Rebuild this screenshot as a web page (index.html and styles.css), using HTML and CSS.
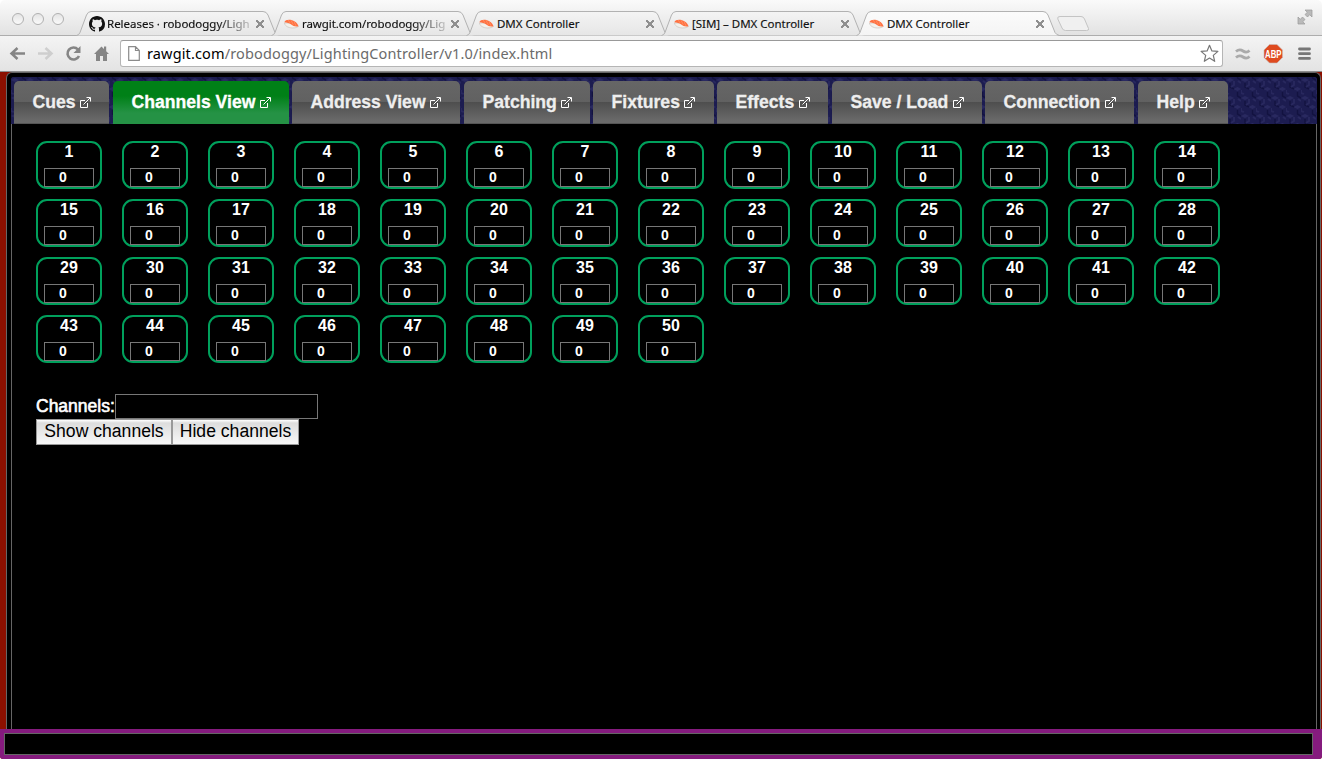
FILE: index.html
```html
<!DOCTYPE html>
<html lang="en">
<head>
<meta charset="utf-8">
<title>DMX Controller</title>
<link rel="stylesheet" href="styles.css">
</head>
<body>
<svg class="defs" width="0" height="0">
  <defs>
    <linearGradient id="tabfill" x1="0" y1="0" x2="0" y2="1"><stop offset="0" stop-color="#f4f4f4"/><stop offset="1" stop-color="#e6e6e6"/></linearGradient>
    <linearGradient id="activefill" x1="0" y1="0" x2="0" y2="1"><stop offset="0" stop-color="#fbfbfb"/><stop offset="1" stop-color="#f4f4f4"/></linearGradient>
    <pattern id="weave" width="15" height="18" patternUnits="userSpaceOnUse">
      <rect width="15" height="18" fill="#1c1c50"/>
      <path d="M0 3l4-2 4 2-4 2zM7.500 12l4-2 3.500 2-3.500 2z" fill="#292960"/>
      <path d="M4 6v4l4 2M11.500 15v3M11.500-1v2l3.500 2" stroke="#121240" stroke-width="1.500" fill="none"/>
      <path d="M8 4v4l-3 2M0 13v3l3 1M12 4l3 2" stroke="#28285e" stroke-width="1.800" fill="none"/>
    </pattern>
    <symbol id="sushi" viewBox="0 0 15 10"><path d="M.5 4c0 2.500 3.500 5 8 5 3.500 0 5.500-.8 6-2L8 4z" fill="#f3f1ec" stroke="#c4beb6" stroke-width=".6"/><path d="M.3 3.200C1 .8 4.500.2 7.500 1c3.500 1 6 3 7 6.200-3 .7-5.200 0-7.300-1.700C5.300 4 3 3.600.3 3.200z" fill="#ff7040"/><path d="M4 1l2.200 3M7 1.200l2.300 4.500M10 2.500l2 4.300" stroke="#ffa27a" stroke-width=".6"/></symbol>
    <symbol id="ext" viewBox="0 0 11 11"><path d="M5 3.500H.5v7h7V6M3.500 7.500l6.500-6.500M6.500.5h4v4" fill="none" stroke="#fff"/></symbol>
    <symbol id="shape" viewBox="0 0 206 25"><path d="M.5 24.500Q3 24 4 21.500L10.500 4Q12 .5 15 .5H187Q190.500 .5 192 4L199 21.500Q200.500 24 203.500 24.500"/></symbol>
  </defs>
</svg>
<header class="chrome">
  <div class="tabstrip">
    <div class="lights"><i></i><i></i><i></i></div>
    <div class="btabs">
      <div class="btab"><svg class="shape"><use href="#shape"/></svg><svg class="github" viewBox="0 0 16 16"><path fill="#111" d="M8 0C3.580 0 0 3.580 0 8c0 3.540 2.290 6.530 5.470 7.590.4.070.55-.17.55-.38 0-.19-.01-.82-.01-1.490-2.010.37-2.530-.49-2.690-.94-.09-.23-.48-.94-.82-1.130-.28-.15-.68-.52-.01-.53.63-.01 1.080.58 1.230.82.72 1.210 1.870.87 2.330.66.070-.52.28-.87.51-1.070-1.780-.2-3.640-.89-3.640-3.950 0-.87.31-1.590.82-2.150-.08-.2-.36-1.020.08-2.120 0 0 .67-.21 2.200.82.64-.18 1.320-.27 2-.27s1.360.09 2 .27c1.530-1.040 2.200-.82 2.200-.82.44 1.100.16 1.920.08 2.120.51.56.82 1.270.82 2.150 0 3.070-1.870 3.750-3.650 3.950.29.25.54.73.54 1.480 0 1.070-.01 1.930-.01 2.200 0 .21.15.46.55.38A8 8 0 0 0 16 8c0-4.420-3.580-8-8-8z"/></svg><span class="title fade releases">Releases · robodoggy/Ligh</span><b class="x"></b></div>
      <div class="btab"><svg class="shape"><use href="#shape"/></svg><svg class="fav"><use href="#sushi"/></svg><span class="title fade">rawgit.com/robodoggy/Lig</span><b class="x"></b></div>
      <div class="btab"><svg class="shape"><use href="#shape"/></svg><svg class="fav"><use href="#sushi"/></svg><span class="title">DMX Controller</span><b class="x"></b></div>
      <div class="btab"><svg class="shape"><use href="#shape"/></svg><svg class="fav"><use href="#sushi"/></svg><span class="title">[SIM] – DMX Controller</span><b class="x"></b></div>
      <div class="btab active"><svg class="shape"><use href="#shape"/></svg><svg class="fav"><use href="#sushi"/></svg><span class="title">DMX Controller</span><b class="x"></b></div>
    </div>
    <svg class="newtab" viewBox="0 0 34 18"><path d="M4 1.500h21q2.500 0 3.500 2.500l4 9.500q.8 2-2 2H9.500q-2.500 0-3.500-2.500L1.800 4Q1 1.500 4 1.500z" fill="#f0f0f0" stroke="#c4c4c4"/></svg>
    <svg class="expand" viewBox="0 0 16 16"><path d="M8 1h7v7l-2.300-2.300L10.500 8 8 5.500l2.300-2.200zM1 8l2.300 2.300L5.500 8 8 10.500l-2.200 2.200L8 15H1z" fill="#bababa" stroke="#999" stroke-width=".7"/></svg>
  </div>
  <div class="toolbar">
    <svg class="nav" viewBox="0 0 112 36">
      <path d="M25 17.500H12M17.500 12l-6 5.500 6 5.500" fill="none" stroke="#858585" stroke-width="2.500"/>
      <path d="M38 17.500h13M45.500 12l6 5.500-6 5.500" fill="none" stroke="#cecece" stroke-width="2.500"/>
      <path d="M78 13.500A6 6 0 1 0 79 20" fill="none" stroke="#858585" stroke-width="2.600"/><path d="M80.500 10v7h-7z" fill="#858585"/>
      <path d="M94 18l7.500-7.500L104 13v-2.500h2.200v4.700L109 18h-2v7h-4v-5h-3v5h-4v-7z" fill="#858585"/>
    </svg>
    <div class="omni">
      <svg class="page" viewBox="0 0 12 15"><path d="M.7.7h6.800l3.800 3.800v9.800H.7zM7.500.7v3.800h3.800" fill="#fff" stroke="#8b8b8b" stroke-width="1.200"/></svg>
      <span class="url"><span class="host">rawgit.com</span>/robodoggy/LightingController/v1.0/index.html</span>
      <svg class="star" viewBox="0 0 19 19"><path d="M9.500 1.300l2.400 5.600 6 .5-4.600 4 1.400 5.900-5.200-3.200-5.200 3.200 1.400-5.900-4.600-4 6-.5z" fill="#fff" stroke="#777" stroke-width="1.200" stroke-linejoin="round"/></svg>
    </div>
    <svg class="ext-icons" viewBox="0 0 99 36">
      <path d="M13 15.500q3.500-3 7-.5t6.500-.5M13 21.500q3.500-3 7-.5t6.500-.5" fill="none" stroke="#aaa" stroke-width="2.800"/>
      <path d="M46.500 8.500h7.500l5.500 5.500v7.500l-5.500 5.500h-7.500L41 21.500V14z" fill="#df4b20" stroke="#c8bcb8" stroke-width=".6"/>
      <text x="42" y="21.500" textLength="16.500" lengthAdjust="spacingAndGlyphs" class="abp">ABP</text>
      <path d="M76.500 13h10M76.500 17.700h10M76.500 22.400h10" stroke="#777" stroke-width="2.800" stroke-linecap="round"/>
    </svg>
  </div>
</header>
<main class="app">
  <section class="frame">
    <nav class="tabs">
      <svg class="weave"><rect width="100%" height="100%" fill="url(#weave)"/></svg>
      <a class="tab cues">Cues<svg><use href="#ext"/></svg></a>
      <a class="tab channels selected">Channels View<svg><use href="#ext"/></svg></a>
      <a class="tab address">Address View<svg><use href="#ext"/></svg></a>
      <a class="tab patching">Patching<svg><use href="#ext"/></svg></a>
      <a class="tab fixtures">Fixtures<svg><use href="#ext"/></svg></a>
      <a class="tab effects">Effects<svg><use href="#ext"/></svg></a>
      <a class="tab save">Save / Load<svg><use href="#ext"/></svg></a>
      <a class="tab connection">Connection<svg><use href="#ext"/></svg></a>
      <a class="tab help">Help<svg><use href="#ext"/></svg></a>
    </nav>
    <div class="panel">
      <div class="grid" id="grid"></div>
      <div class="row"><label for="ch">Channels:</label><input id="ch" class="field"></div>
      <div class="row"><button class="show">Show channels</button><button class="hide">Hide channels</button></div>
    </div>
  </section>
  <footer class="status"><div class="statusbox"></div></footer>
</main>
<script src="script.js"></script>
</body>
</html>
```
FILE: styles.css
```css
* { box-sizing: border-box; }
html { background: #fff; }
body { margin: 0; width: 1322px; height: 759px; overflow: hidden; display: flex; flex-direction: column; font-family: "Liberation Sans", Arial, sans-serif; }
.defs { position: absolute; }

.chrome { height: 72px; flex: none; font-family: "Noto Sans", sans-serif; border-bottom: 1px solid #8c8c8c; }
.tabstrip { height: 36px; display: flex; background: linear-gradient(#fafafa, #e2e2e2); border-bottom: 1px solid #adadad; border-radius: 5px 5px 0 0; }
.lights { width: 76px; flex: none; padding: 13px 0 0 12px; display: flex; gap: 8px; }
.lights i { width: 12px; height: 12px; border-radius: 50%; border: 1px solid #b0b0b0; background: linear-gradient(#e4e4e4, #fafafa); }
.btabs { display: flex; padding-top: 11px; flex: none; }
.btab { width: 195px; height: 25px; display: flex; align-items: center; position: relative; padding-left: 13px; }
.shape { position: absolute; left: 0; top: 0; width: 206px; height: 25px; fill: url(#tabfill); stroke: #b2b2b2; }
.active .shape { fill: url(#activefill); }
.github { width: 16px; height: 16px; position: relative; flex: none; }
.fav { width: 15px; height: 10px; position: relative; flex: none; }
.title { position: relative; margin-left: 2px; width: 148px; overflow: hidden; white-space: nowrap; font-size: 11.500px; color: #111; line-height: 20px; letter-spacing: -.02px; -webkit-text-stroke: .15px #111; }
.fav + .title { margin-left: 3px; }
.fade { letter-spacing: -.06px; -webkit-mask-image: linear-gradient(90deg, #000 110px, rgba(0,0,0,.15) 145px); mask-image: linear-gradient(90deg, #000 110px, rgba(0,0,0,.15) 145px); }
.releases { letter-spacing: -.02px; }
.x { position: absolute; left: 180px; top: 9px; width: 8px; height: 8px; background: linear-gradient(45deg, transparent 43%, #909090 43% 57%, transparent 57%), linear-gradient(-45deg, transparent 43%, #909090 43% 57%, transparent 57%); }
.newtab { width: 34px; height: 18px; margin: 15px 0 0 5px; flex: none; }
.expand { width: 16px; height: 16px; margin: 9px 9px 0 auto; }
.toolbar { height: 35px; display: flex; background: linear-gradient(#f4f4f4, #e3e3e3); }
.nav { width: 112px; height: 36px; flex: none; }
.omni { margin: 4px 0 0 8px; width: 1103px; height: 27px; border: 1px solid #b5b5b5; border-top-color: #999; border-radius: 3px; background: #fff; display: flex; align-items: center; padding-left: 7px; }
.page { width: 12px; height: 15px; }
.url { margin: -2px 0 0 7px; font-size: 14.500px; letter-spacing: .14px; color: #6b6b6b; flex: 1; white-space: nowrap; }
.host { color: #000; }
.star { width: 19px; height: 19px; margin-right: 3px; }
.ext-icons { width: 99px; height: 36px; }
.abp { font: bold 10px "Liberation Sans", sans-serif; fill: #fff; }

.app { flex: 1; display: flex; flex-direction: column; background: #8c1000; border-radius: 0 0 3px 3px; overflow: hidden; }
.frame { height: 657px; margin: 0 1px 0 6px; border: 1px solid #666; border-bottom: 0; border-radius: 6px 6px 0 0; background: #000; padding: 4px 3px 0 4px; display: flex; flex-direction: column; }
.tabs { height: 47px; flex: none; position: relative; display: flex; padding: 4px 0 0 3px; background: #1b1b4d; overflow: hidden; border-radius: 3px 3px 0 0; }
.weave { position: absolute; left: 0; top: 0; width: 100%; height: 100%; }
.tab { position: relative; height: 43px; flex: none; padding-left: 18.500px; display: flex; border-radius: 5px 5px 0 0; background: linear-gradient(#666 0, #616161 21px, #4e4e4e 21px, #6a6a6a 40px); border-bottom: 1px solid #555; color: #eee; font-weight: bold; font-size: 17.600px; line-height: 43px; white-space: nowrap; -webkit-text-stroke: .3px; }
.tab svg { width: 11px; height: 11px; margin: 16px 0 0 4.500px; -webkit-text-stroke: 0; }
.selected { color: #fff; border: 0; background: linear-gradient(#008017 0, #008017 15px, #259245 32px, #259245); }
.cues { width: 95px; margin-right: 4px; }
.channels { width: 176px; margin-right: 3px; }
.address { width: 168px; margin-right: 4px; }
.patching { width: 126px; margin-right: 3px; }
.fixtures { width: 121px; margin-right: 3px; }
.effects { width: 111px; margin-right: 4px; }
.save { width: 150px; margin-right: 3px; }
.connection { width: 149px; margin-right: 4px; }
.help { width: 90px; }

.panel { flex: 1; border: 1px solid #666; border-width: 0 1px; padding: 17px 0 0 24px; color: #fff; font-size: 17.500px; }
.grid { display: grid; grid-template-columns: repeat(14, 66px); grid-auto-rows: 48px; gap: 10px 20px; margin-bottom: 31px; }
.cell { border: 2px solid #00a05c; border-radius: 11px; display: flex; flex-direction: column; align-items: center; font-size: 16px; font-weight: bold; line-height: 18px; }
.cell .value { margin-top: 7px; width: 50px; height: 19px; border: 1px solid #777; padding-left: 14px; font-size: 14px; line-height: 17px; }
.row { display: flex; height: 25px; line-height: 24px; }
.row label { width: 79px; -webkit-text-stroke: .6px #fff; }
.field { width: 203px; height: 25px; background: #000; border: 1px solid #777; padding: 0; }
.row button { height: 26px; border: 1px solid #999; border-radius: 0; padding: 0 0 2px; background: linear-gradient(#fff, #ddd 3px, #f8f8f8); font: 17.600px/22px "Liberation Sans", Arial, sans-serif; color: #000; white-space: nowrap; }
.row .show { width: 136px; }
.row .hide { width: 127px; }
.status { height: 30px; background: #851b7e; padding: 4px 9px 0 4px; }
.statusbox { height: 22px; background: #000; border: 1px solid #666; }
```
FILE: script.js
```js
const grid = document.getElementById("grid");
for (let channel = 1; channel <= 50; channel++) {
  const cell = document.createElement("div");
  cell.className = "cell";
  const value = document.createElement("span");
  value.className = "value";
  value.textContent = "0";
  cell.append(String(channel), value);
  grid.append(cell);
}
```
